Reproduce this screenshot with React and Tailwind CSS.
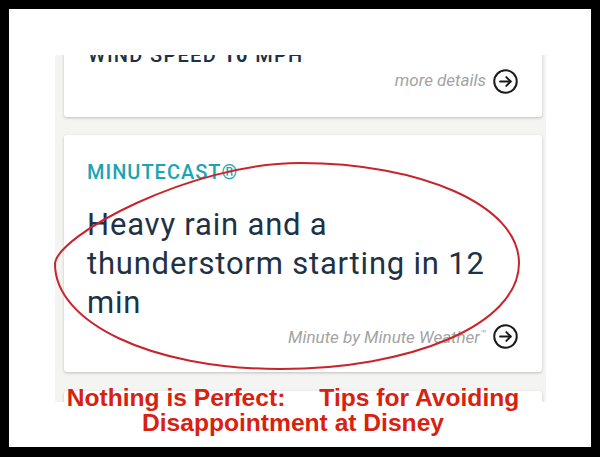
import React from 'react';

const roboto = { fontFamily: 'Roboto, "Noto Sans", sans-serif' };

function ArrowCircle() {
  return (
    <svg width="25" height="25" viewBox="0 0 24 24" fill="none" stroke="#1b1b1b" strokeWidth="1.9" strokeLinecap="round" strokeLinejoin="round">
      <circle cx="12" cy="12" r="10.8" />
      <path d="M6.8 12h10" />
      <path d="M12.8 7.8 17 12l-4.2 4.2" />
    </svg>
  );
}

function Ellipse() {
  return (
    <svg className="absolute left-0 top-0 pointer-events-none" width="582" height="438" viewBox="9 9 582 438" fill="none">
      <path
        d="M55 264 C56 236 190 163 300 163 C420 163 519 205 519 263 C519 325 410 369 280 369 C150 369 55 322 55 264 Z"
        stroke="#c9232c"
        strokeWidth="2"
      />
    </svg>
  );
}

export default function App() {
  return (
    <div className="w-[600px] h-[457px] bg-black pt-[9px] pl-[9px] pr-[9px] pb-[10px]">
      <div className="relative w-[582px] h-[438px] bg-white pt-[46px] overflow-hidden">
        {/* cropped phone screen */}
        <div className="ml-[46px] w-[491px] h-[347px] overflow-hidden bg-[#f4f4f3] pl-[9px] pr-[4px]" style={roboto}>
          <div className="-mt-[40px] h-[102px] bg-white rounded-[3px] shadow-[0_1px_3px_rgba(0,0,0,0.22)] pt-[28px] pl-[24px] pr-[24px]">
            <div className="text-[20px] leading-[24px] font-medium text-[#1e3245] tracking-[1.3px]">
              WIND SPEED <span className="font-bold">10</span> MPH
            </div>
            <div className="mt-[2px] h-[24px] flex items-center justify-end gap-[7px]">
              <span className="italic text-[17px] text-[#a3a3a3]">more details</span>
              <ArrowCircle />
            </div>
          </div>

          <div className="mt-[18px] h-[237px] bg-white rounded-[3px] shadow-[0_1px_3px_rgba(0,0,0,0.22)] pt-[25px] pl-[23px] pr-[24px]">
            <div className="text-[20px] leading-[24px] font-medium tracking-[1px] text-[#1ba4b3]">MINUTECAST®</div>
            <div className="mt-[21px] text-[31px] leading-[39px] tracking-[0.8px] text-[#1e3245]">
              Heavy rain and a<br />thunderstorm starting in 12<br />min
            </div>
            <div className="mt-[2px] h-[24px] flex items-center justify-end gap-[7px]">
              <span className="italic text-[17px] text-[#a3a3a3] pt-[3px]">
                Minute by Minute Weather<span className="text-[10px] align-[6px]">™</span>
              </span>
              <ArrowCircle />
            </div>
          </div>

          <div className="mt-[19px] h-[40px] bg-white rounded-[3px] shadow-[0_1px_3px_rgba(0,0,0,0.22)]" />
        </div>

        <Ellipse />

        {/* title */}
        <div
          className="relative -mt-[17px] pr-[14px] text-center text-[24.6px] leading-[25px] font-bold text-[#d8210f]"
          style={{ fontFamily: '"Liberation Sans", Arial, sans-serif' }}
        >
          <div>
            Nothing is Perfect:<span className="inline-block w-[34px]" />Tips for Avoiding
          </div>
          <div>Disappointment at Disney</div>
        </div>
      </div>
    </div>
  );
}
